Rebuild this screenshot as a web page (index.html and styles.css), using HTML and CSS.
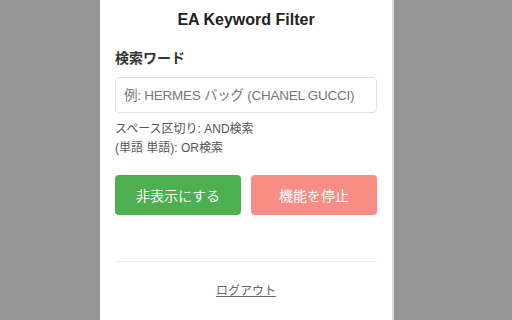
FILE: index.html
```html
<!DOCTYPE html>
<html lang="ja">
<head>
    <meta charset="UTF-8">
    <title>EA Keyword Filter</title>
    <link rel="stylesheet" href="styles.css">
</head>
<body>
    <div class="popup">
        <h1 class="title">EA Keyword Filter</h1>
        <label class="field-label" for="keyword">検索ワード</label>
        <input id="keyword" class="keyword-input" type="text" placeholder="例: HERMES バッグ (CHANEL GUCCI)">
        <div class="hint">
            <p>スペース区切り: AND検索</p>
            <p>(単語 単語): OR検索</p>
        </div>
        <div class="actions">
            <button class="btn btn-hide">非表示にする</button>
            <button class="btn btn-stop" disabled>機能を停止</button>
        </div>
        <div class="footer">
            <a href="#" class="logout">ログアウト</a>
        </div>
    </div>
</body>
</html>
```

FILE: styles.css
```css
/* Page */
body {
    margin: 0;
    padding: 0;
    background-color: #969696;
    font-family: 'Liberation Sans', 'Noto Sans CJK JP', sans-serif;
    overflow: hidden;
}

/* Popup panel */
.popup {
    width: 262px;
    height: 320px;
    margin-left: 100px;
    padding: 10px 15px 0 15px;
    box-sizing: content-box;
    background-color: #fff;
    border-right: 2px solid #dcdcdc;
}

.title {
    margin: 0 0 18px 0;
    font-size: 16px;
    line-height: 20px;
    font-weight: bold;
    text-align: center;
    color: #222;
}

.field-label {
    display: block;
    margin-bottom: 9px;
    font-size: 14px;
    line-height: 20px;
    font-weight: bold;
    color: #333;
}

.keyword-input {
    display: block;
    width: 100%;
    height: 36px;
    box-sizing: border-box;
    padding: 0 8px;
    border: 1px solid #e2e2e2;
    border-radius: 4px;
    font-family: inherit;
    font-size: 13.5px;
    letter-spacing: -0.25px;
    color: #333;
    outline: none;
}

.keyword-input::placeholder {
    color: #777;
}

.hint {
    margin-top: 7px;
    font-size: 12px;
    line-height: 19px;
    color: #555;
}

.hint p {
    margin: 0;
}

/* Buttons */
.actions {
    display: flex;
    gap: 10px;
    margin-top: 17px;
}

.btn {
    flex: 1;
    height: 40px;
    border: none;
    border-radius: 4px;
    font-family: inherit;
    font-size: 14px;
    color: #fff;
    cursor: pointer;
}

.btn-hide {
    background-color: #4caf50;
}

.btn-stop {
    background-color: #f44336;
    opacity: 0.6;
    cursor: default;
}

/* Footer */
.footer {
    margin-top: 46px;
    padding-top: 18px;
    border-top: 1px solid #f0f0f0;
    text-align: center;
    line-height: 20px;
}

.logout {
    font-size: 12px;
    color: #666;
    text-decoration: underline;
}
```
